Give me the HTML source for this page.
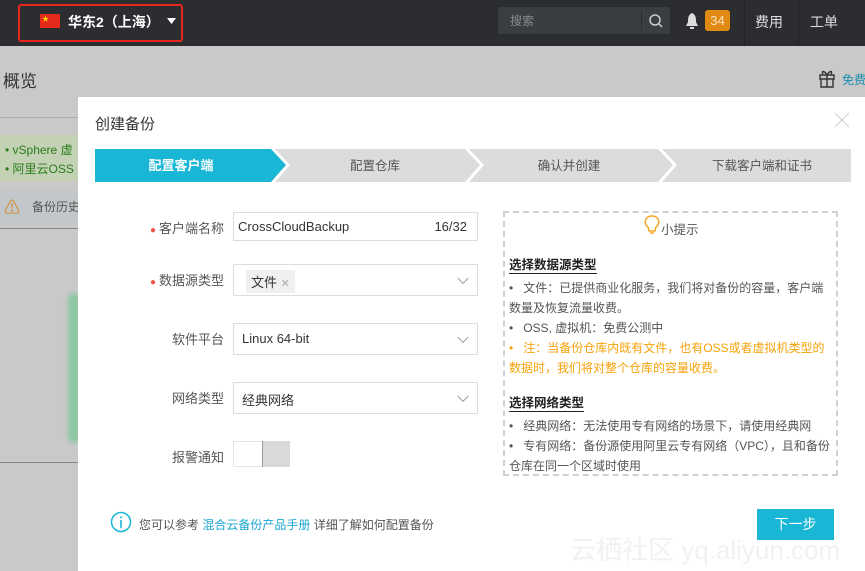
<!DOCTYPE html>
<html><head><meta charset="utf-8"><style>
*{margin:0;padding:0;box-sizing:border-box}
body{width:865px;height:571px;overflow:hidden;position:relative;background:#c9c9c9;font-family:"Liberation Sans","Noto Sans CJK SC",sans-serif;color:#333}
.a{position:absolute}
.top{left:0;top:0;width:865px;height:46px;background:#2b2d31}
.lbl{font-size:13px;color:#555;text-align:right;width:100px;left:124px}
.inp{left:233px;width:245px;border:1px solid #dcdcdc;background:#fff;font-size:13px;color:#333}
.chev{position:absolute;right:10px;top:50%;width:8px;height:8px;border-right:1px solid #999;border-bottom:1px solid #999;transform:translateY(-70%) rotate(45deg)}
.dot{color:#f0554d;font-size:10px;margin-right:3px}
.tip{font-size:12px;color:#555;line-height:20px}
</style></head><body>
<div class="a top"></div>
<div class="a" style="left:18px;top:4px;width:165px;height:38px;border:2px solid #e8261e;border-radius:3px"></div>
<div class="a" style="left:40px;top:14px;width:20px;height:14px;background:#e42b1b"></div>
<div class="a" style="left:42px;top:14px;color:#ffd800;font-size:7px">★</div>
<div class="a" style="left:68px;top:12px;color:#fff;font-size:14px;font-weight:bold">华东2（上海）</div>
<svg class="a" style="left:167px;top:18px" width="9" height="6"><path d="M0 0 H9 L4.5 6Z" fill="#fff"/></svg>
<div class="a" style="left:498px;top:7px;width:172px;height:27px;background:#3a3d42;border-radius:2px"></div>
<div class="a" style="left:510px;top:12px;color:#8a8c90;font-size:12px">搜索</div>
<div class="a" style="left:641px;top:10px;width:1px;height:21px;background:#2b2d31"></div>
<svg class="a" style="left:648px;top:13px" width="16" height="16"><circle cx="7" cy="7" r="5" fill="none" stroke="#ccc" stroke-width="1.5"/><path d="M11 11 L14 14" stroke="#ccc" stroke-width="1.5"/></svg>
<svg class="a" style="left:684px;top:12px" width="16" height="18"><path d="M8 1 C4 3 4 6 4 10 L2 14 H14 L12 10 C12 6 12 3 8 1Z M6 15 H10 V17 H6Z" fill="#ddd"/></svg>
<div class="a" style="left:705px;top:10px;width:25px;height:21px;background:#e18a12;border-radius:3px;color:#fde3c0;font-size:13px;text-align:center;line-height:21px">34</div>
<div class="a" style="left:744px;top:0;width:1px;height:46px;background:#222"></div>
<div class="a" style="left:755px;top:12px;color:#ddd;font-size:14px">费用</div>
<div class="a" style="left:798px;top:0;width:1px;height:46px;background:#222"></div>
<div class="a" style="left:810px;top:12px;color:#ddd;font-size:14px">工单</div>
<div class="a" style="left:3px;top:67px;font-size:17px;color:#333">概览</div>
<svg class="a" style="left:818px;top:68px" width="18" height="20"><path d="M2 7 H16 V11 H2Z M3 11 V19 H15 V11 M9 7 V19 M9 7 C6 2 3 3 5 6 M9 7 C12 2 15 3 13 6" fill="none" stroke="#333" stroke-width="1.4"/></svg>
<div class="a" style="left:842px;top:71px;font-size:12px;color:#1a8fb0;white-space:nowrap">免费</div>
<div class="a" style="left:0;top:117px;width:78px;height:1px;background:#aaa"></div>
<div class="a" style="left:0;top:135px;width:78px;height:46px;background:#c3d1b4"></div>
<div class="a" style="left:5px;top:141px;font-size:12px;color:#2a7d1a;line-height:19px;white-space:nowrap">• vSphere 虚<br>• 阿里云OSS</div>
<div class="a" style="left:0;top:190px;width:78px;height:33px;background:#c2c7ca"></div>
<div class="a" style="left:4px;top:194px;font-size:16px;color:#d58a2a">⚠</div>
<div class="a" style="left:32px;top:198px;font-size:12px;color:#555;white-space:nowrap">备份历史</div>
<div class="a" style="left:0;top:228px;width:78px;height:1px;background:#888"></div>
<div class="a" style="left:68px;top:293px;width:12px;height:150px;background:#8fc7a3;border-radius:6px;filter:blur(2px)"></div>
<div class="a" style="left:0;top:462px;width:78px;height:1px;background:#888"></div>
<div class="a" style="left:78px;top:97px;width:787px;height:474px;background:#fff"></div>
<div class="a" style="left:95px;top:113px;font-size:15px;color:#333">创建备份</div>
<svg class="a" style="left:834px;top:112px" width="16" height="16"><path d="M1 1 L15 15 M15 1 L1 15" stroke="#ccc" stroke-width="1"/></svg>
<svg class="a" style="left:95px;top:149px" width="756" height="33">
<polygon points="0,0 176,0 191,16 176,33 0,33" fill="#19b6d6"/>
<polygon points="180,0 370,0 385,16 370,33 180,33 195,16" fill="#dcdcdc"/>
<polygon points="374,0 563,0 578,16 563,33 374,33 389,16" fill="#dcdcdc"/>
<polygon points="567,0 756,0 756,33 567,33 582,16" fill="#dcdcdc"/>
<text x="86" y="21" font-size="13" fill="#fff" text-anchor="middle" font-family="Liberation Sans,Noto Sans CJK SC,sans-serif" font-weight="bold">配置客户端</text>
<text x="280" y="21" font-size="12.5" fill="#555" text-anchor="middle" font-family="Liberation Sans,Noto Sans CJK SC,sans-serif">配置仓库</text>
<text x="474" y="21" font-size="12.5" fill="#555" text-anchor="middle" font-family="Liberation Sans,Noto Sans CJK SC,sans-serif">确认并创建</text>
<text x="667" y="21" font-size="12.5" fill="#555" text-anchor="middle" font-family="Liberation Sans,Noto Sans CJK SC,sans-serif">下载客户端和证书</text>
</svg>
<div class="a lbl" style="top:218px"><span class="dot">●</span>客户端名称</div>
<div class="a inp" style="top:212px;height:29px;padding:6px 4px">CrossCloudBackup<span style="position:absolute;right:10px">16/32</span></div>
<div class="a lbl" style="top:270px"><span class="dot">●</span>数据源类型</div>
<div class="a inp" style="top:264px;height:32px"><span style="position:absolute;left:12px;top:5px;background:#f0f0f0;padding:2px 5px;font-size:13px">文件 <span style="color:#aaa;font-size:11px">✕</span></span><i class="chev"></i></div>
<div class="a lbl" style="top:329px">软件平台</div>
<div class="a inp" style="top:323px;height:32px;padding:7px 8px">Linux 64-bit<i class="chev"></i></div>
<div class="a lbl" style="top:388px">网络类型</div>
<div class="a inp" style="top:382px;height:32px;padding:7px 8px">经典网络<i class="chev"></i></div>
<div class="a lbl" style="top:447px">报警通知</div>
<div class="a" style="left:233px;top:441px;width:57px;height:26px;border:1px solid #e5e5e5;background:#fff"></div>
<div class="a" style="left:262px;top:441px;width:28px;height:26px;background:#d9d9d9;border-left:1px solid #999"></div>
<div class="a" style="left:503px;top:211px;width:335px;height:265px;border:2px dashed #d0d0d0"></div>
<svg class="a" style="left:644px;top:215px" width="16" height="20"><path d="M8 1 A6 6 0 0 0 4 12 L5 16 H11 L12 12 A6 6 0 0 0 8 1Z M6 18 H10" fill="none" stroke="#f5a623" stroke-width="1.5"/></svg>
<div class="a" style="left:661px;top:219px;font-size:12.5px;color:#555">小提示</div>
<div class="a" style="left:509px;top:254px;font-size:12.5px;font-weight:bold;color:#222;border-bottom:1px solid #222">选择数据源类型</div>
<div class="a tip" style="left:509px;top:278px;width:325px">•&nbsp;&nbsp;&nbsp;文件：已提供商业化服务，我们将对备份的容量，客户端数量及恢复流量收费。<br>•&nbsp;&nbsp;&nbsp;OSS, 虚拟机：免费公测中<br><span style="color:#f5a20a">•&nbsp;&nbsp;&nbsp;注：当备份仓库内既有文件，也有OSS或者虚拟机类型的数据时，我们将对整个仓库的容量收费。</span></div>
<div class="a" style="left:509px;top:392px;font-size:12.5px;font-weight:bold;color:#222;border-bottom:1px solid #222">选择网络类型</div>
<div class="a tip" style="left:509px;top:416px;width:325px">•&nbsp;&nbsp;&nbsp;经典网络：无法使用专有网络的场景下，请使用经典网<br>•&nbsp;&nbsp;&nbsp;专有网络：备份源使用阿里云专有网络（VPC），且和备份仓库在同一个区域时使用</div>
<svg class="a" style="left:110px;top:511px" width="22" height="22"><circle cx="11" cy="11" r="9.5" fill="none" stroke="#19b6d6" stroke-width="1.5"/><rect x="10.2" y="9" width="1.6" height="8" fill="#19b6d6"/><circle cx="11" cy="6.3" r="1" fill="#19b6d6"/></svg>
<div class="a" style="left:139px;top:516px;font-size:12px;color:#555;white-space:nowrap">您可以参考 <span style="color:#19a6d0">混合云备份产品手册</span> 详细了解如何配置备份</div>
<div class="a" style="left:757px;top:509px;width:77px;height:31px;background:#19b6d6;color:#fff;font-size:14px;text-align:center;line-height:31px">下一步</div>
<div class="a" style="left:570px;top:530px;font-size:26px;color:rgba(230,230,230,0.55);white-space:nowrap">云栖社区 yq.aliyun.com</div>
</body></html>
